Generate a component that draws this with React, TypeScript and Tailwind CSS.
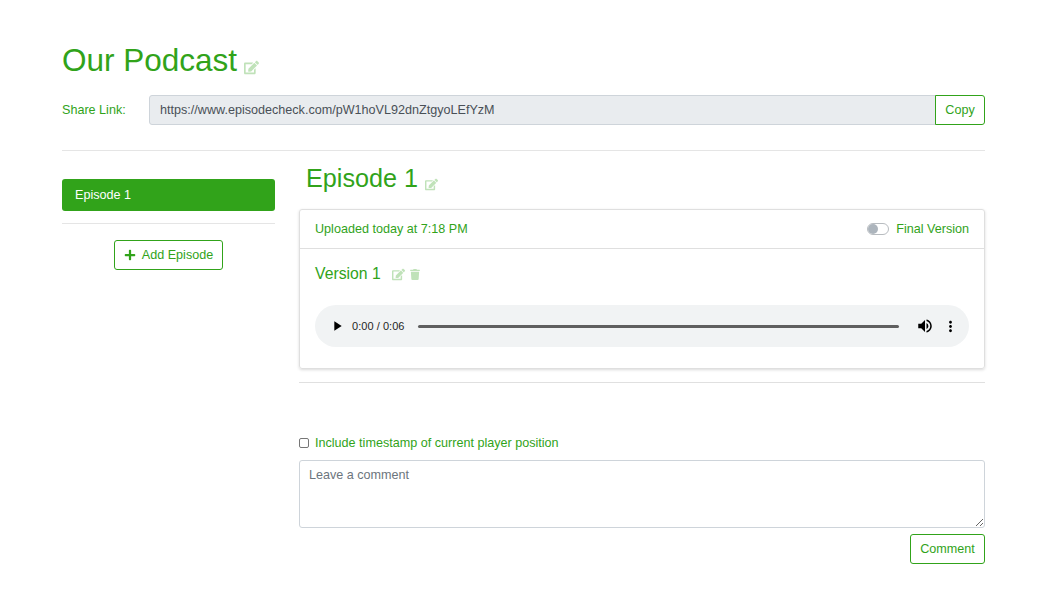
import { FaEdit, FaPlus, FaTrash } from "react-icons/fa";
import { MdMoreVert, MdPlayArrow, MdVolumeUp } from "react-icons/md";

const green = "text-[#31a31a]";

function AudioPlayer() {
  return (
    <div className="h-[42px] rounded-full bg-[#f1f3f4] flex items-center pl-[14px] pr-[10px] text-black">
      <MdPlayArrow className="w-[16px] h-[16px] shrink-0" />
      <span className="ml-[7px] text-[11px] tracking-[0.05px] text-[#1f1f1f] whitespace-nowrap">0:00 / 0:06</span>
      <div className="ml-[13px] flex-1 h-[3px] rounded-full bg-[#5f5f5f]" />
      <MdVolumeUp className="ml-[17px] w-[18px] h-[18px] shrink-0" />
      <MdMoreVert className="ml-[8px] w-[17px] h-[17px] shrink-0" />
    </div>
  );
}

export default function App() {
  return (
    <div className={`min-h-screen bg-white px-[62px] pt-[40px] text-[12.6px] ${green}`} style={{ fontFamily: '"Liberation Sans", Arial, sans-serif' }}>
      {/* Header */}
      <div className="flex items-end h-[40px]">
        <h1 className="text-[31.5px] leading-[40px]">Our Podcast</h1>
        <FaEdit className="ml-[7px] mb-[5px] w-[15px] h-[15px] opacity-30" />
      </div>
      <div className="flex items-center mt-[15px] pr-[3px]">
        <label className="w-[87px]">Share Link:</label>
        <div className="flex-1 h-[30px] flex items-center px-[10px] bg-[#e9ecef] border border-[#ced4da] rounded-l-[3px] text-[#495057]">
          https://www.episodecheck.com/pW1hoVL92dnZtgyoLEfYzM
        </div>
        <button className="h-[30px] w-[50px] border border-[#31a31a] rounded-r-[3px] -ml-px">Copy</button>
      </div>
      <hr className="mt-[25px] mr-[3px] border-[#e5e5e5]" />

      <div className="flex mt-[11px] pr-[3px]">
        {/* Sidebar */}
        <div className="w-[213px] shrink-0 pt-[17px]">
          <div className="h-[32px] flex items-center px-[13px] bg-[#31a31a] rounded-[3px] text-white">Episode 1</div>
          <hr className="mt-[12px] border-[#e5e5e5]" />
          <div className="flex justify-center mt-[16px]">
            <button className="h-[30px] w-[109px] flex items-center justify-center border border-[#31a31a] rounded-[3px]">
              <FaPlus className="w-3 h-3 mr-[6px]" />
              Add Episode
            </button>
          </div>
        </div>

        {/* Episode */}
        <div className="flex-1 ml-[24px] min-w-0">
          <div className="flex items-end h-[32px] pl-[7px]">
            <h2 className="text-[25.2px] leading-[32px]">Episode 1</h2>
            <FaEdit className="ml-[7px] mb-[3px] w-[13px] h-[13px] opacity-30" />
          </div>
          <div className="mt-[15px] h-[160px] border border-[#dfdfdf] rounded-[3px] shadow-[0_1px_3px_rgba(0,0,0,0.15)]">
            <div className="h-[39px] flex items-center justify-between px-[15px] border-b border-[#dfdfdf]">
              <span>Uploaded today at 7:18 PM</span>
              <div className="flex items-center">
                <div className="w-[22px] h-[12px] rounded-full border border-[#b8bcc0] flex items-center">
                  <div className="w-[10px] h-[10px] rounded-full bg-[#adb5bd]" />
                </div>
                <span className="ml-[7px]">Final Version</span>
              </div>
            </div>
            <div className="px-[15px] pt-[15px]">
              <div className="flex items-center h-[20px]">
                <span className="text-[15.75px]">Version 1</span>
                <FaEdit className="ml-[11px] w-[13px] h-[13px] opacity-30" />
                <FaTrash className="ml-[5px] w-[10px] h-[11px] opacity-30" />
              </div>
              <div className="mt-[21px]">
                <AudioPlayer />
              </div>
            </div>
          </div>
          <hr className="mt-[13px] border-[#e0e0e0]" />

          {/* Comment form */}
          <div className="mt-[52px] flex items-center h-[16px]">
            <input type="checkbox" className="w-[10px] h-[10px] mr-[6px] appearance-none border border-[#767676] rounded-[2px] bg-white" />
            <span>Include timestamp of current player position</span>
          </div>
          <textarea
            placeholder="Leave a comment"
            className="block mt-[9px] w-full h-[68px] px-[9px] py-[6px] border border-[#ced4da] rounded-[3px] leading-[16px] placeholder:text-[#6c757d] outline-none"
          />
          <div className="flex justify-end mt-[6px]">
            <button className="h-[30px] w-[75px] border border-[#31a31a] rounded-[3px]">Comment</button>
          </div>
        </div>
      </div>
    </div>
  );
}
